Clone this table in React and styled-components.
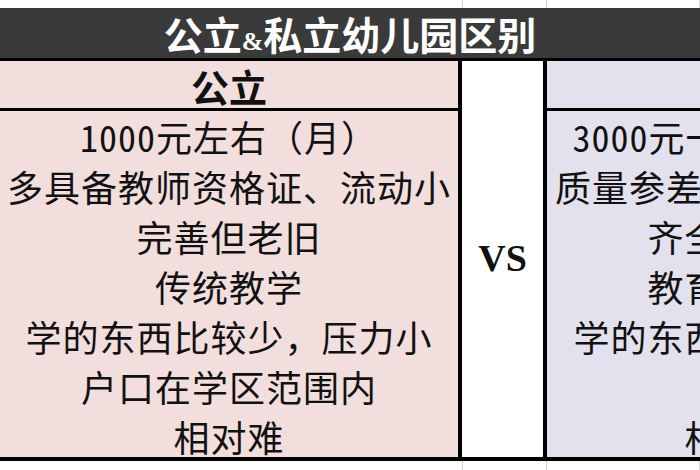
import styled, { createGlobalStyle } from "styled-components";

const publicRows = [
  "1000元左右（月）",
  "多具备教师资格证、流动小",
  "完善但老旧",
  "传统教学",
  "学的东西比较少，压力小",
  "户口在学区范围内",
  "相对难",
];

const privateRows = [
  "3000元一万元左右（月）",
  "质量参差不齐、流动性较大",
  "齐全、设施新颖",
  "教育方式多样化",
  "学的东西比较多，压力大",
  "无要求",
  "相对较容易",
];

const App = () => {
  return (
    <>
      <GlobalStyle />
      <Page>
        <GridStrip>
          <GridCell $w={463} />
          <GridCell $w={84} />
          <GridCell />
        </GridStrip>
        <TitleBar>
          公立<Amp>&amp;</Amp>私立幼儿园区别
        </TitleBar>
        <Table>
          <Column $w={458} $bg="#f1dedd">
            <HeadCell>公立</HeadCell>
            <Body>
              {publicRows.map((row) => (
                <Line key={row}>{row}</Line>
              ))}
            </Body>
          </Column>
          <Divider />
          <Middle>VS</Middle>
          <Divider />
          <Column $w={460} $bg="#e3e1ed">
            <HeadCell>私立</HeadCell>
            <Body>
              {privateRows.map((row) => (
                <Line key={row}>{row}</Line>
              ))}
            </Body>
          </Column>
        </Table>
        <GridStrip $grow>
          <GridCell $w={463} />
          <GridCell $w={84} />
          <GridCell />
        </GridStrip>
      </Page>
    </>
  );
};

const GlobalStyle = createGlobalStyle`
  html, body {
    margin: 0;
    padding: 0;
    background: #ffffff;
    overflow: hidden;
  }
`;

const Page = styled.div`
  width: 700px;
  height: 470px;
  overflow: hidden;
  display: flex;
  flex-direction: column;
  font-family: "Noto Sans Mono CJK SC", "Noto Sans CJK SC", sans-serif;
  color: #111;
`;

const GridStrip = styled.div`
  display: flex;
  height: 8px;
  flex: ${(p) => (p.$grow ? "1" : "none")};
  background: #ffffff;
`;

const GridCell = styled.div`
  width: ${(p) => (p.$w ? `${p.$w}px` : "auto")};
  flex: ${(p) => (p.$w ? "none" : "1")};
  border-right: 1px solid #d6d6d6;
  box-sizing: border-box;
`;

const TitleBar = styled.div`
  height: 50px;
  background: #3a3a3a;
  border-bottom: 3px solid #000;
  color: #ffffff;
  font-family: "Noto Sans CJK SC", sans-serif;
  font-weight: 700;
  font-size: 39px;
  line-height: 50px;
  text-align: center;
  white-space: nowrap;
`;

const Amp = styled.span`
  font-size: 26px;
  font-family: "Liberation Serif", serif;
`;

const Table = styled.div`
  display: flex;
  height: 396px;
  border-bottom: 4px solid #000;
  flex: none;
`;

const Column = styled.div`
  width: ${(p) => p.$w}px;
  flex: none;
  display: flex;
  flex-direction: column;
  background: ${(p) => p.$bg};
`;

const HeadCell = styled.div`
  height: 47px;
  border-bottom: 3px solid #000;
  font-family: "Noto Sans CJK SC", sans-serif;
  font-weight: 700;
  font-size: 38px;
  line-height: 50px;
  text-align: center;
`;

const Body = styled.div`
  flex: 1;
  display: flex;
  flex-direction: column;
`;

const Line = styled.div`
  height: 50px;
  line-height: 50px;
  font-size: 36px;
  letter-spacing: 1px;
  text-align: center;
  white-space: nowrap;
`;

const Divider = styled.div`
  width: 4px;
  flex: none;
  background: #000;
`;

const Middle = styled.div`
  width: 81px;
  flex: none;
  background: #ffffff;
  display: flex;
  align-items: center;
  justify-content: center;
  padding-bottom: 2px;
  font-family: "Liberation Serif", serif;
  font-weight: 700;
  font-size: 38px;
  color: #111;
`;

export default App;
